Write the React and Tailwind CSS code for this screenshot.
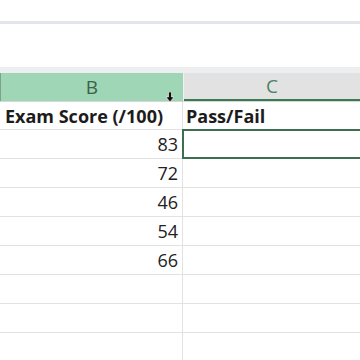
import React from "react";

const scores = ["83", "72", "46", "54", "66", "", "", ""];

export default function App() {
  return (
    <div
      className="w-[360px] h-[360px] overflow-hidden bg-white relative"
      style={{ fontFamily: '"Open Sans", "Liberation Sans", sans-serif' }}
    >
      {/* ribbon bottom edge */}
      <div className="h-[21px] bg-white" />
      <div className="h-[3px] bg-[#e2e5e9]" />
      {/* formula bar area */}
      <div className="h-[43px] bg-white" />
      <div className="h-[6px] bg-[#eceef0]" />

      {/* column headers */}
      <div className="flex h-[28px]">
        <div className="w-[183px] shrink-0 bg-[#9fd6b6] border-l border-[#7aa58a] flex items-center justify-center text-[19px] font-normal text-[#3a6349]">
          B
        </div>
        <div className="w-px bg-[#f0f0f0]" />
        <div className="flex-1 bg-[#e2e2e2] border-b-2 border-[#3b7a52] flex items-center justify-center text-[19px] font-normal text-[#4f8262]">
          C
        </div>
      </div>

      {/* header row */}
      <div className="flex h-[29px] border-t border-[#d6d6d6]">
        <div className="w-[183px] shrink-0 border-r border-b border-[#e2e2e2] flex items-center pl-[5px] pt-px text-[18px] font-bold text-[#1c1c1c] whitespace-nowrap">
          Exam Score (/100)
        </div>
        <div className="flex-1 border-b border-[#e2e2e2] flex items-center pl-[3px] pt-px text-[18px] font-bold text-[#1c1c1c] whitespace-nowrap">
          Pass/Fail
        </div>
      </div>

      {/* data rows */}
      {scores.map((s, i) => (
        <div key={i} className="flex h-[29px]">
          <div className="w-[183px] shrink-0 border-r border-b border-[#e2e2e2] flex items-center justify-end pr-[4px] pt-px text-[18px] text-[#222]">
            {s}
          </div>
          <div
            className={
              i === 0
                ? "w-[200px] shrink-0 -ml-px -mt-px h-[30px] border-2 border-[#3d6e4f]"
                : "flex-1 border-b border-[#e2e2e2]"
            }
          />
        </div>
      ))}

      {/* column select cursor */}
      <svg
        className="absolute left-[166px] top-[92px]"
        width="8"
        height="10"
        viewBox="0 0 8 10"
      >
        <path d="M2.5 0h3v5h2.5L4 10 0 5h2.5z" fill="#111" stroke="#fff" strokeWidth="0.6" />
      </svg>
    </div>
  );
}
